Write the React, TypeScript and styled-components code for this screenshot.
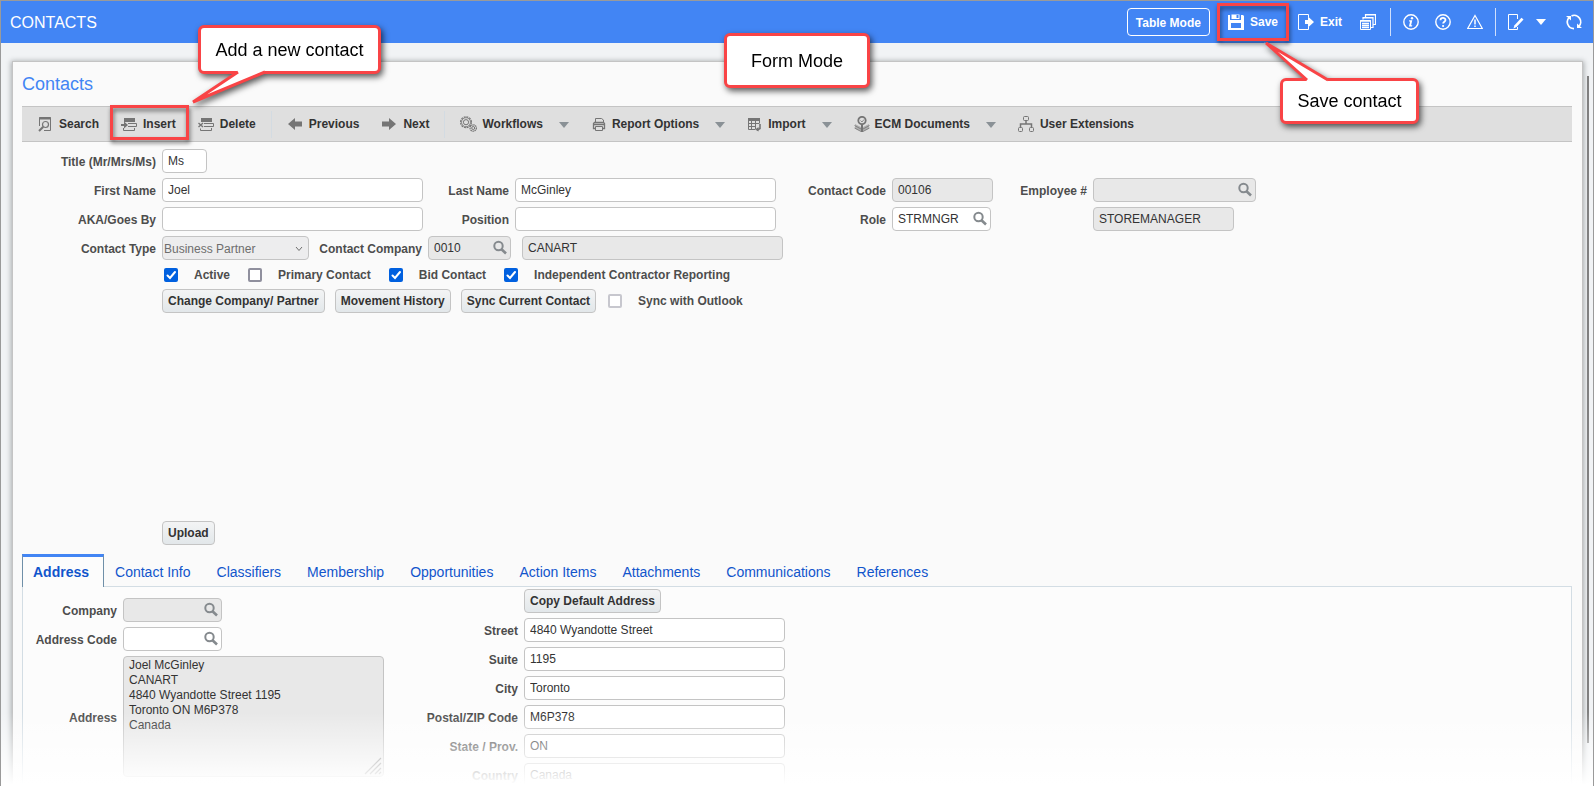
import React, { useId } from 'react';
import type { ReactNode } from 'react';
import styled, { createGlobalStyle, css } from 'styled-components';

const Global = createGlobalStyle`
  *, *::before, *::after { box-sizing: border-box; }
  body { margin: 0; background: #fff; }
  body, button, input, select, textarea {
    font-family: "Liberation Sans", Arial, Helvetica, sans-serif;
    font-size: 12px;
  }
`;

/* ---------- shell ---------- */

const Shell = styled.div`
  position: relative;
  display: flex;
  flex-direction: column;
  height: 100vh;
  overflow: hidden;
  border: 1px solid #9a9a9a;
  border-bottom: 0;
  background: #f1f3f5;
`;

const Header = styled.header`
  display: flex;
  align-items: center;
  flex: none;
  height: 42px;
  padding: 0 11px 0 9px;
  background: #4285f4;
  color: #fff;
`;

const AppTitle = styled.h1`
  margin: 0 auto 0 0;
  padding-top: 2px;
  font-size: 16px;
  font-weight: 400;
  line-height: 20px;
`;

const Body = styled.div`
  display: flex;
  flex: 1;
  min-height: 0;
  padding: 18px 4px 0 11px;
`;

const Panel = styled.main`
  flex: 1;
  min-width: 0;
  padding: 0 10px 0 9px;
  border: 1px solid #c4c4c4;
  border-bottom: 0;
  background: #fafafa;
  box-shadow: 0 1px 5px 1px rgba(60, 64, 67, 0.4);
`;

const ScrollThumb = styled.div`
  width: 2px;
  margin: 15px 0 43px 4px;
  background: #808080;
`;

const Fade = styled.div`
  position: absolute;
  z-index: 2;
  right: -1px;
  bottom: 0;
  left: -1px;
  height: 74px;
  background: linear-gradient(rgba(255, 255, 255, 0), #fff 98%);
  pointer-events: none;
`;

const PanelTitle = styled.h2`
  margin: 0;
  color: #4285f4;
  font-size: 18px;
  font-weight: 400;
  line-height: 44px;
`;

/* ---------- header actions ---------- */

const ModeButton = styled.button`
  height: 28px;
  padding: 2px 8px 0;
  border: 1px solid #fff;
  border-radius: 4px;
  background: transparent;
  color: #fff;
  font-weight: 700;
`;

const HeaderAction = styled.button<{ $gap: number }>`
  position: relative;
  display: flex;
  align-items: center;
  gap: 6px;
  height: 22px;
  margin-left: ${(p) => p.$gap}px;
  padding: 0;
  border: 0;
  background: none;
  color: #fff;
  font-weight: 700;
`;

const HeaderDivider = styled.span<{ $gap: number }>`
  width: 1px;
  height: 28px;
  margin-left: ${(p) => p.$gap}px;
  background: #cfdffc;
`;

/* ---------- toolbar ---------- */

const Toolbar = styled.div`
  display: flex;
  align-items: center;
  height: 36px;
  padding-left: 15px;
  border: solid #c4c4c4;
  border-width: 1px 0;
  background: #dfdfdf;
`;

const ToolGroup = styled.div`
  display: flex;
  gap: 22px;
`;

const ToolDivider = styled.span`
  width: 1px;
  height: 27px;
  margin: 0 15px;
  background: #d3dbe2;
`;

const ToolButton = styled.button<{ $menu?: boolean }>`
  position: relative;
  display: flex;
  align-items: center;
  gap: ${(p) => (p.$menu ? 5 : 6)}px;
  height: 20px;
  padding: 0;
  border: 0;
  background: none;
  color: #333;
  font-weight: 700;
  white-space: nowrap;
`;

const ToolCaret = styled.span`
  display: flex;
  margin: 2px 0 0 11px;
`;

/* ---------- annotations ---------- */

const Highlight = styled.span<{ $inset: string }>`
  position: absolute;
  inset: ${(p) => p.$inset};
  border: 3px solid #f94446;
  filter: drop-shadow(1px 3px 2px rgba(0, 0, 0, 0.55));
  pointer-events: none;
`;

const calloutBox = css`
  position: absolute;
  z-index: 3;
  display: flex;
  align-items: center;
  justify-content: center;
  border: 3px solid #f94446;
  border-radius: 6px;
  background: #fff;
  color: #000;
  font-size: 18px;
  font-weight: 400;
  line-height: 24px;
  white-space: nowrap;
  filter: drop-shadow(2px 3px 3px rgba(0, 0, 0, 0.65));
`;

const InsertCallout = styled.span`
  ${calloutBox}
  left: 77px;
  top: -89px;
  width: 183px;
  height: 49px;
`;

const SaveCallout = styled.span`
  ${calloutBox}
  left: 52px;
  top: 67px;
  width: 139px;
  height: 46px;
`;

const ModeCallout = styled.div`
  ${calloutBox}
  left: 50%;
  top: 32px;
  width: 146px;
  height: 55px;
  margin-left: -73px;
`;

const Tail = styled.svg`
  position: absolute;
  left: -3px;
  top: -3px;
  width: 1px;
  height: 1px;
  overflow: visible;
`;

/* ---------- fields ---------- */

const FormArea = styled.form`
  display: flex;
  flex-direction: column;
  gap: 5px;
  padding-top: 7px;
`;

const FieldGrid = styled.div`
  display: grid;
  grid-template-columns: 134px 261px 80px 261px 104px 101px 88px 163px;
  grid-auto-rows: 24px;
  gap: 5px 6px;
`;

const FieldRow = styled.div`
  display: flex;
  gap: 6px;
`;

const Label = styled.label<{ $width?: number }>`
  align-self: center;
  width: ${(p) => (p.$width ? `${p.$width}px` : 'auto')};
  padding-top: 2px;
  color: #4d4d4d;
  font-weight: 700;
  line-height: 16px;
  text-align: right;
  white-space: nowrap;
`;

const fieldLook = css`
  border: 1px solid #c4c4c4;
  border-radius: 4px;
  background: #fff;
  color: #333;
  outline: 0;
  &:read-only { background: #e8e8e8; }
`;

const TextInput = styled.input<{ $width?: number }>`
  ${fieldLook}
  width: ${(p) => (p.$width ? `${p.$width}px` : '100%')};
  height: 24px;
  padding: 0 5px 1px;
`;

const LookupBox = styled.span<{ $width: number }>`
  position: relative;
  display: block;
  flex: none;
  width: ${(p) => p.$width}px;
`;

const LookupButton = styled.button`
  position: absolute;
  top: 4px;
  right: 3px;
  display: flex;
  padding: 0;
  border: 0;
  background: none;
`;

const SelectBox = styled.span`
  position: relative;
  width: 147px;
  margin-right: 4px;
`;

const Select = styled.select`
  width: 100%;
  height: 24px;
  padding: 1px 20px 0 1px;
  border: 1px solid #c4c4c4;
  border-radius: 4px;
  appearance: none;
  background: #ededee;
  color: #6d6d6d;
  opacity: 1;
`;

const SelectArrow = styled.svg`
  position: absolute;
  top: 10px;
  right: 6px;
  pointer-events: none;
`;

const CompanyName = styled.div`
  width: 261px;
  margin-left: 5px;
`;

const CheckRow = styled.div`
  display: flex;
  align-items: center;
  gap: 18px;
  height: 19px;
  padding-left: 142px;
`;

const CheckLabel = styled.label`
  display: flex;
  align-items: center;
  gap: 16px;
  color: #4d4d4d;
  font-weight: 700;
  line-height: 16px;
`;

const CheckFrame = styled.span`
  position: relative;
  display: flex;
  svg { position: absolute; inset: 0; pointer-events: none; }
  input:not(:checked) + svg { display: none; }
`;

const CheckInput = styled.input`
  width: 14px;
  height: 14px;
  margin: 0;
  border: 2px solid #8f8f9d;
  border-radius: 2px;
  appearance: none;
  background: #fff;
  &:checked { border-color: #0060df; background: #0060df; }
  &:disabled { border-color: #c7c7ce; }
`;

const ButtonRow = styled.div`
  display: flex;
  align-items: center;
  gap: 10px;
  padding-left: 140px;
`;

const PushButton = styled.button`
  height: 24px;
  padding: 0 5px 1px;
  border: 1px solid #c4c4c4;
  border-radius: 4px;
  background: linear-gradient(#f3f4f5, #e2e7ea);
  color: #333;
  font-weight: 700;
  white-space: nowrap;
`;

const OutlookCheck = styled.div`
  padding-left: 2px;
`;

const PhotoArea = styled.div`
  height: 198px;
`;

/* ---------- tabs ---------- */

const TabBar = styled.nav`
  display: flex;
  height: 32px;
  margin-top: 9px;
`;

const Tab = styled.a<{ $active?: boolean }>`
  position: relative;
  margin-bottom: ${(p) => (p.$active ? '-1px' : '0')};
  padding: 5px 14px 0 10px;
  border: solid transparent;
  border-width: 3px 1px 0;
  color: #1155cc;
  font-size: 14px;
  line-height: 20px;
  text-decoration: none;
  ${(p) =>
    p.$active &&
    css`
      border-color: #4285f4 #6f8fa8 transparent;
      background: #fcfcfc;
      font-weight: 700;
    `}
`;

const TabPanel = styled.section`
  display: flex;
  align-items: flex-start;
  gap: 6px;
  border: 1px solid #d3dde4;
  background: #fcfcfc;
`;

const AddressLookup = styled.div`
  display: grid;
  grid-template-columns: 94px 261px;
  gap: 5px 6px;
  padding-top: 11px;
`;

const AddressFields = styled.div`
  display: grid;
  grid-template-columns: 128px 261px;
  gap: 5px 6px;
  padding: 2px 0 24px;
`;

const SecondColumn = styled.div`
  grid-column: 2;
`;

const AreaBox = styled.span`
  position: relative;
  display: flex;
  svg { position: absolute; right: 2px; bottom: 2px; }
`;

const Area = styled.textarea`
  ${fieldLook}
  width: 100%;
  height: 121px;
  padding: 1px 5px 0;
  line-height: 15px;
  resize: none;
`;

/* ---------- icons ---------- */

type IconProps = { children: ReactNode; w?: number; h?: number; color?: string };

const Icon = ({ children, w = 16, h = 16, color = 'currentColor' }: IconProps) => (
  <svg width={w} height={h} viewBox={`0 0 ${w} ${h}`} fill="none" stroke={color} aria-hidden="true">
    {children}
  </svg>
);

const GREY = '#757575';

const SaveIcon = () => (
  <Icon>
    <path d="M0 1h2v5h11V1h2l1 1v14H0z" fill="#fff" stroke="none" />
    <path d="M3.5 0.5v4.5h8V.5z" fill="#fff" stroke="none" />
    <path d="M8.5 1h2v3h-2z" fill="#4285f4" stroke="none" />
    <path d="M3 9h10v5H3z" fill="#4285f4" stroke="none" />
    <path d="M2.5 0v5.5h10V0" stroke="#4285f4" />
    <path d="M2 15h12" stroke="#fff" strokeWidth="2" />
  </Icon>
);

const ExitIcon = () => (
  <Icon>
    <path d="M10.500 3V.5H.5v15h10V13" />
    <path d="M7 6h3V2.500L16 8l-6 5.500V10H7z" fill="currentColor" stroke="none" />
  </Icon>
);

const FormsIcon = () => (
  <Icon>
    <path d="M5.500 3V.5h10v10H13M5.500 1h10" strokeWidth="1.200" />
    <path d="M3 5.500V3.500h10v10h-2M3 4h10" strokeWidth="1.200" />
    <path d="M.5 6.500h10v9H.5z" />
    <path d="M0 7h11M2 9.500h7M2 11.500h7M2 13.500h7" strokeWidth="1.300" />
  </Icon>
);

const InfoIcon = () => (
  <Icon>
    <circle cx="8" cy="8" r="7.200" strokeWidth="1.400" />
    <circle cx="9" cy="4.200" r="1.200" fill="currentColor" stroke="none" />
    <path d="M6.200 6.300h3.100L8.100 11.200h1.200l-.3 1.200H5.900l1.200-4.900H5.900z" fill="currentColor" stroke="none" />
  </Icon>
);

const HelpIcon = () => (
  <Icon>
    <circle cx="8" cy="8" r="7.200" strokeWidth="1.400" />
    <path d="M5.500 6.200c0-3 5-3 5-.2 0 1.700-2.400 1.700-2.400 3.600" strokeWidth="1.800" />
    <circle cx="8.100" cy="12" r="1.100" fill="currentColor" stroke="none" />
  </Icon>
);

const WarnIcon = () => (
  <Icon>
    <path d="M8 1.500L15.300 14.500H.7z" strokeWidth="1.200" />
    <path d="M8 5.500v5M8 11.500v1.600" strokeWidth="1.500" />
  </Icon>
);

const EditIcon = () => (
  <Icon>
    <path d="M9.500 5V.5h-9v15h9V13" />
    <path d="M5.500 14.500l1-3.200L13.500 3.800l2 1.700-7 7.500z" fill="currentColor" stroke="none" />
  </Icon>
);

const RefreshIcon = () => (
  <Icon>
    <path d="M3.300 3.300A6.600 6.600 0 0 0 8 14.600" strokeWidth="1.700" />
    <path d="M12.700 12.700A6.600 6.600 0 0 0 5.500 1.900" strokeWidth="1.700" />
    <path d="M0 2h5v4.500z M16 14h-5V9.500z" fill="currentColor" stroke="none" />
  </Icon>
);

const CaretIcon = ({ color = '#8a9196' }: { color?: string }) => (
  <Icon w={10} h={6} color="none">
    <path d="M0 0h10L5 6z" fill={color} />
  </Icon>
);

const SearchFormIcon = () => (
  <Icon color={GREY}>
    <path d="M2.500 10V1.500h11v13H7" />
    <path d="M2 2.500h12" strokeWidth="2" />
    <circle cx="8.500" cy="8.500" r="3" strokeWidth="1.200" />
    <path d="M6.300 10.800L2 15" strokeWidth="2" />
  </Icon>
);

const InsertIcon = () => (
  <Icon color={GREY}>
    <path d="M3 2h11v4H3z" fill={GREY} stroke="none" />
    <path d="M7 7.500h8.500v3H7M2.500 12v2.500h11V12" />
    <path d="M0 8h3V5.500L7 9l-4 3.500V10H0z" fill={GREY} stroke="none" />
  </Icon>
);

const DeleteIcon = () => (
  <Icon color={GREY}>
    <path d="M3 2h11v4H3z" fill={GREY} stroke="none" />
    <path d="M6 7.500h9.500v3H6M2.500 12.500v2h11V12" />
    <path d="M.5 7l4.500 4M5 7L.5 11" strokeWidth="1.400" />
  </Icon>
);

const ArrowIcon = ({ right }: { right?: boolean }) => (
  <Icon color="none">
    <path
      d={right ? 'M1 5.500h7V2l7 6-7 6v-3.500H1z' : 'M15 5.500H8V2L1 8l7 6v-3.500h7z'}
      fill={GREY}
    />
  </Icon>
);

const GearsIcon = () => (
  <Icon w={17} color={GREY}>
    <circle cx="6" cy="6.200" r="5.400" strokeWidth="1.200" strokeDasharray="2 .8" />
    <circle cx="6" cy="6.200" r="4.500" strokeWidth=".8" />
    <circle cx="6" cy="6.200" r="2.600" />
    <circle cx="13.200" cy="12" r="3.200" strokeWidth="1.200" strokeDasharray="1.500 .6" />
    <circle cx="13.200" cy="12" r="1.500" />
  </Icon>
);

const PrinterIcon = () => (
  <Icon color={GREY}>
    <path d="M4.500 6V2.500h6l2 1.500v2" />
    <path d="M4 12.500H2.500v-5l1-1h9l1 1v5H12" strokeWidth="1.300" />
    <path d="M3 8.500h10" strokeWidth="1.500" />
    <path d="M4.500 10.500h7v4h-7z" />
  </Icon>
);

const ImportIcon = () => (
  <Icon color={GREY}>
    <path d="M1 2h12v3H1z" fill={GREY} stroke="none" />
    <path d="M1.500 3v10.500H8M1.500 7.500h11M1.500 10.500H9M4.500 4v9.500M8.500 4v9M12.500 3v4" />
    <path d="M13 8v4.500l-3 1.800" strokeWidth="1.600" />
    <path d="M11.500 11v4.500L8 13.500z" fill={GREY} stroke="none" />
  </Icon>
);

const EcmIcon = () => (
  <Icon color={GREY}>
    <path d="M1 8l7 3.500L15 8v4.500L8 16l-7-3.500z" fill="#b0b0b0" stroke="none" />
    <path d="M.5 9.500L7 13M.5 12L7 15.500M15.500 9.500L9 13M15.500 12L9 15.500" strokeWidth=".8" />
    <circle cx="8" cy="4.500" r="3.700" strokeWidth="1.800" fill="#dfdfdf" />
    <path d="M6.500 4.500L8 6l2-2.500" strokeWidth=".8" />
    <path d="M8 8v8" strokeWidth="2" />
  </Icon>
);

const OrgIcon = () => (
  <Icon color={GREY}>
    <rect x="5.500" y=".5" width="5" height="4" rx="1" />
    <path d="M8 5v3M2.500 11V8h11v3" strokeWidth="1.500" />
    <rect x=".5" y="11.500" width="4" height="4" rx="1" />
    <rect x="11.500" y="11.500" width="4" height="4" rx="1" />
  </Icon>
);

const LensIcon = () => (
  <Icon color="#858a8e">
    <circle cx="6.500" cy="6" r="4.200" strokeWidth="2" />
    <path d="M9.500 9.200L14 13.500" strokeWidth="2.600" />
  </Icon>
);

/* ---------- composed controls ---------- */

type FieldProps = { label: string; value?: string; width?: number; labelWidth?: number; readOnly?: boolean };

const TextField = ({ label, value = '', width, labelWidth, readOnly }: FieldProps) => {
  const id = useId();
  return (
    <>
      <Label htmlFor={id} $width={labelWidth}>{label}</Label>
      <TextInput id={id} defaultValue={value} $width={width} readOnly={readOnly} />
    </>
  );
};

const LookupField = ({ label, value = '', width = 99, labelWidth, readOnly }: FieldProps) => {
  const id = useId();
  return (
    <>
      <Label htmlFor={id} $width={labelWidth}>{label}</Label>
      <LookupBox $width={width}>
        <TextInput id={id} defaultValue={value} readOnly={readOnly} />
        <LookupButton type="button" aria-label={`Look up ${label}`}>
          <LensIcon />
        </LookupButton>
      </LookupBox>
    </>
  );
};

const Check = ({ label, checked, disabled }: { label: string; checked?: boolean; disabled?: boolean }) => (
  <CheckLabel>
    <CheckFrame>
      <CheckInput type="checkbox" defaultChecked={checked} disabled={disabled} />
      <svg width="14" height="14" viewBox="0 0 14 14" fill="none" stroke="#fff" strokeWidth="2" strokeLinecap="round">
        <path d="M3.500 7.500L6 10l5-6" />
      </svg>
    </CheckFrame>
    {label}
  </CheckLabel>
);

const Tool = ({ icon, label, menu, children }: { icon: ReactNode; label: string; menu?: boolean; children?: ReactNode }) => (
  <ToolButton type="button" $menu={menu}>
    {icon}
    {label}
    {menu && <ToolCaret><CaretIcon /></ToolCaret>}
    {children}
  </ToolButton>
);

const tabs = [
  'Address',
  'Contact Info',
  'Classifiers',
  'Membership',
  'Opportunities',
  'Action Items',
  'Attachments',
  'Communications',
  'References',
];

const addressText = 'Joel McGinley\nCANART\n4840 Wyandotte Street 1195\nToronto ON M6P378\nCanada';

export default function App() {
  return (
    <Shell>
      <Global />
      <Header>
        <AppTitle>CONTACTS</AppTitle>
        <ModeButton type="button">Table Mode</ModeButton>
        <HeaderAction type="button" $gap={18}>
          <SaveIcon />
          Save
          <Highlight $inset="-8px -11px" />
          <SaveCallout>
            Save contact
            <Tail>
              <path d="M27 3L-16 -36L48 3z" fill="#fff" />
              <path d="M27 2L-14 -35L48 2" fill="none" stroke="#f94446" strokeWidth="3" strokeLinejoin="bevel" />
            </Tail>
          </SaveCallout>
        </HeaderAction>
        <HeaderAction type="button" $gap={20}>
          <ExitIcon />
          Exit
        </HeaderAction>
        <HeaderAction type="button" $gap={18} aria-label="Forms"><FormsIcon /></HeaderAction>
        <HeaderDivider $gap={14} />
        <HeaderAction type="button" $gap={12} aria-label="Information"><InfoIcon /></HeaderAction>
        <HeaderAction type="button" $gap={16} aria-label="Help"><HelpIcon /></HeaderAction>
        <HeaderAction type="button" $gap={16} aria-label="Warnings"><WarnIcon /></HeaderAction>
        <HeaderDivider $gap={12} />
        <HeaderAction type="button" $gap={12} aria-label="Edit"><EditIcon /></HeaderAction>
        <HeaderAction type="button" $gap={12} aria-label="Edit options"><CaretIcon color="#fff" /></HeaderAction>
        <HeaderAction type="button" $gap={20} aria-label="Refresh"><RefreshIcon /></HeaderAction>
      </Header>

      <Body>
        <Panel>
          <PanelTitle>Contacts</PanelTitle>
          <Toolbar>
            <ToolGroup>
              <Tool icon={<SearchFormIcon />} label="Search" />
              <Tool icon={<InsertIcon />} label="Insert">
                <Highlight $inset="-9px -13px -6px -11px" />
                <InsertCallout>
                  Add a new contact
                  <Tail>
                    <path d="M40 46L-7 78L67 46z" fill="#fff" />
                    <path d="M40 47L-5 77L67 47" fill="none" stroke="#f94446" strokeWidth="3" strokeLinejoin="bevel" />
                  </Tail>
                </InsertCallout>
              </Tool>
              <Tool icon={<DeleteIcon />} label="Delete" />
            </ToolGroup>
            <ToolDivider />
            <ToolGroup>
              <Tool icon={<ArrowIcon />} label="Previous" />
              <Tool icon={<ArrowIcon right />} label="Next" />
            </ToolGroup>
            <ToolDivider />
            <ToolGroup>
              <Tool icon={<GearsIcon />} label="Workflows" menu />
              <Tool icon={<PrinterIcon />} label="Report Options" menu />
              <Tool icon={<ImportIcon />} label="Import" menu />
              <Tool icon={<EcmIcon />} label="ECM Documents" menu />
              <Tool icon={<OrgIcon />} label="User Extensions" />
            </ToolGroup>
          </Toolbar>

          <FormArea>
            <FieldRow>
              <TextField label="Title (Mr/Mrs/Ms)" value="Ms" labelWidth={134} width={45} />
            </FieldRow>
            <FieldGrid>
              <TextField label="First Name" value="Joel" />
              <TextField label="Last Name" value="McGinley" />
              <TextField label="Contact Code" value="00106" readOnly />
              <LookupField label="Employee #" width={163} readOnly />
              <TextField label="AKA/Goes By" />
              <TextField label="Position" />
              <LookupField label="Role" value="STRMNGR" />
              <span />
              <TextInput aria-label="Role name" defaultValue="STOREMANAGER" readOnly $width={141} />
            </FieldGrid>
            <FieldRow>
              <Label htmlFor="contact-type" $width={134}>Contact Type</Label>
              <SelectBox>
                <Select id="contact-type" disabled>
                  <option>Business Partner</option>
                </Select>
                <SelectArrow width="8" height="6" viewBox="0 0 8 6" fill="none" stroke="#6d6d6d">
                  <path d="M1 1l3 3.500L7 1" />
                </SelectArrow>
              </SelectBox>
              <LookupField label="Contact Company" value="0010" labelWidth={103} width={83} readOnly />
              <CompanyName>
                <TextInput aria-label="Company name" defaultValue="CANART" readOnly />
              </CompanyName>
            </FieldRow>
            <CheckRow>
              <Check label="Active" checked />
              <Check label="Primary Contact" />
              <Check label="Bid Contact" checked />
              <Check label="Independent Contractor Reporting" checked />
            </CheckRow>
            <ButtonRow>
              <PushButton type="button">Change Company/ Partner</PushButton>
              <PushButton type="button">Movement History</PushButton>
              <PushButton type="button">Sync Current Contact</PushButton>
              <OutlookCheck>
                <Check label="Sync with Outlook" disabled />
              </OutlookCheck>
            </ButtonRow>
            <PhotoArea />
            <ButtonRow>
              <PushButton type="button">Upload</PushButton>
            </ButtonRow>
          </FormArea>

          <TabBar>
            {tabs.map((name, i) => (
              <Tab key={name} href="#" $active={i === 0}>{name}</Tab>
            ))}
          </TabBar>
          <TabPanel>
            <AddressLookup>
              <LookupField label="Company" readOnly />
              <LookupField label="Address Code" />
              <Label htmlFor="full-address">Address</Label>
              <AreaBox>
                <Area id="full-address" defaultValue={addressText} readOnly />
                <svg width="18" height="18" viewBox="0 0 18 18" stroke="#777" strokeWidth="1.200" aria-hidden="true">
                  <path d="M1 17L17 1M6 17L17 6M11 17l6-6M15 17l2-2" />
                </svg>
              </AreaBox>
            </AddressLookup>
            <AddressFields>
              <SecondColumn>
                <PushButton type="button">Copy Default Address</PushButton>
              </SecondColumn>
              <TextField label="Street" value="4840 Wyandotte Street" />
              <TextField label="Suite" value="1195" />
              <TextField label="City" value="Toronto" />
              <TextField label="Postal/ZIP Code" value="M6P378" />
              <TextField label="State / Prov." value="ON" />
              <TextField label="Country" value="Canada" />
            </AddressFields>
          </TabPanel>
        </Panel>
        <ScrollThumb />
      </Body>
      <ModeCallout>Form Mode</ModeCallout>
      <Fade />
    </Shell>
  );
}
